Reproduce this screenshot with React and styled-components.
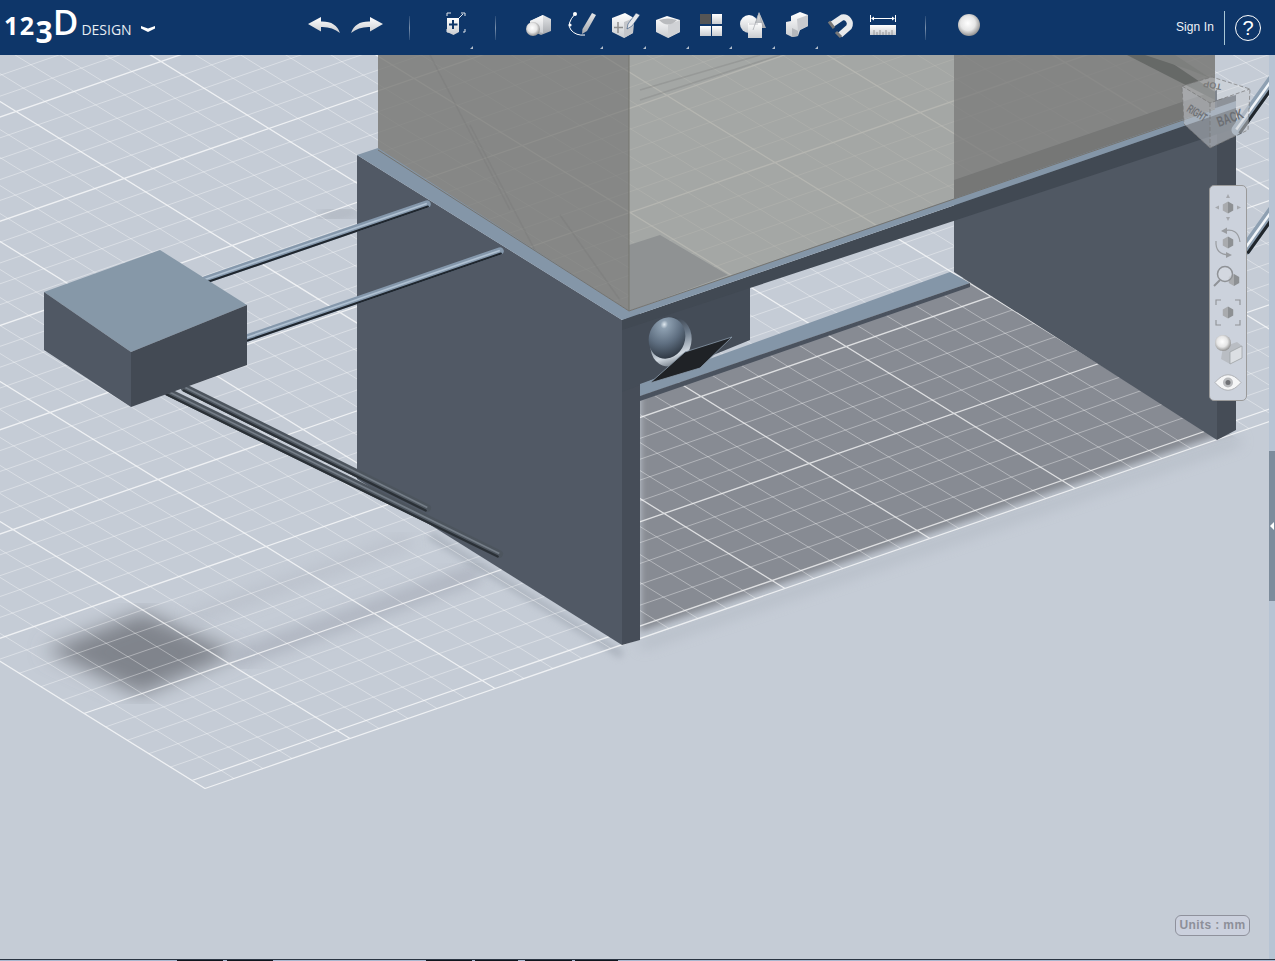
import React from 'react'
import styled, { createGlobalStyle } from 'styled-components'

const GlobalStyle = createGlobalStyle`
    html, body {
        margin: 0;
        padding: 0;
        background: #c5ccd6;
        overflow: hidden;
        font-family: "Liberation Sans", Arial, sans-serif;
    }
`

// floor grid lattice, page coordinates
const O = [192, 780.5]
const A = [108, 67]
const B = [145, -50]
const pt = (i, j) => [O[0] + i * A[0] + j * B[0], O[1] + i * A[1] + j * B[1]]
const fmt = p => `${p[0].toFixed(1)} ${p[1].toFixed(1)}`
const seg = (p, q) => `M${fmt(p)}L${fmt(q)}`

const EDGE_I = 0.12
const MIN_I = -9
const MAX_J = 11

const buildGrid = () => {
    let minor = ''
    let major = ''
    for (let n = MIN_I * 5; n <= 0; n++) {
        const i = n / 5
        const line = seg(pt(i, 0), pt(i, MAX_J))
        if (n % 5 === 0) major += line
        else minor += line
    }
    major += seg(pt(EDGE_I, 0), pt(EDGE_I, MAX_J))
    for (let n = 0; n <= MAX_J * 5; n++) {
        const j = n / 5
        const line = seg(pt(MIN_I, j), pt(EDGE_I, j))
        if (n % 5 === 0) major += line
        else minor += line
    }
    return { minor, major }
}

const grid = buildGrid()

const Page = styled.div`
    display: flex;
    flex-direction: column;
    width: 1275px;
    height: 961px;
`

const Toolbar = styled.header`
    display: flex;
    align-items: center;
    flex: 0 0 55px;
    background: #0e3669;
    color: #fff;
`

const Logo = styled.div`
    display: flex;
    align-items: flex-start;
    width: 299px;
    height: 55px;
    padding-left: 4px;
    font-family: "Open Sans", sans-serif;
`

const LogoNum = styled.span`
    font-size: ${p => p.$size}px;
    font-weight: ${p => p.$weight || 700};
    line-height: 1;
    margin-top: ${p => p.$top}px;
    margin-left: ${p => p.$left || 0}px;
    letter-spacing: ${p => p.$spacing || 0}px;
`

const LogoWord = styled.span`
    font-size: 14px;
    line-height: 1;
    margin: 23px 0 0 3px;
    color: #e8edf3;
`

const Chevron = styled.svg`
    width: 14px;
    height: 7px;
    margin: 25px 0 0 9px;
`

const Tool = styled.div`
    position: relative;
    flex: 0 0 43px;
    height: 55px;
    ${p => p.$marker && `
        &::after {
            content: '';
            position: absolute;
            right: 1px;
            bottom: 6px;
            border-style: solid;
            border-width: 0 0 3px 3px;
            border-color: transparent transparent #b4bfcd transparent;
        }
    `}
    svg {
        display: block;
    }
`

const Separator = styled.div`
    flex: 0 0 1px;
    height: 24px;
    margin-left: ${p => p.$left}px;
    margin-right: ${p => p.$right}px;
    background: linear-gradient(to bottom, rgba(255,255,255,0.1), rgba(255,255,255,0.45), rgba(255,255,255,0.1));
`

const SignIn = styled.div`
    margin-left: auto;
    margin-bottom: 2px;
    font-size: 12px;
    letter-spacing: 0.1px;
    color: #eef3f8;
`

const UserDivider = styled.div`
    width: 1px;
    height: 34px;
    margin: 0 10px;
    background: #a8c6d6;
`

const Help = styled.div`
    display: flex;
    align-items: center;
    justify-content: center;
    box-sizing: border-box;
    width: 26px;
    height: 26px;
    margin-right: 14px;
    border: 1.4px solid #fff;
    border-radius: 50%;
    font-size: 20px;
    line-height: 1;
    color: #fff;
`

const Viewport = styled.main`
    position: relative;
    flex: 1;
    overflow: hidden;
    background: #c5ccd6;
`

const Scene = styled.svg`
    display: block;
    width: 1275px;
    height: 904px;
`

const ViewCube = styled.svg`
    position: absolute;
    top: 15px;
    left: 1175px;
    width: 85px;
    height: 85px;
`

const NavPanel = styled.nav`
    position: absolute;
    top: 130px;
    left: 1209px;
    display: flex;
    flex-direction: column;
    box-sizing: border-box;
    width: 38px;
    height: 216px;
    padding-top: 4px;
    background: #ccd2dc;
    border: 1px solid #9a9a9a;
    border-radius: 5px;
`

const NavItem = styled.svg`
    display: block;
    flex: 0 0 35px;
    width: 36px;
    height: 35px;
`

const Units = styled.div`
    position: absolute;
    top: 860px;
    left: 1175px;
    box-sizing: border-box;
    width: 75px;
    height: 21px;
    border: 1px solid #8f919c;
    border-radius: 6px;
    background: #cbd0dd;
    color: #8d8f99;
    font-size: 12px;
    font-weight: 700;
    letter-spacing: 0.4px;
    line-height: 19px;
    text-align: center;
    white-space: nowrap;
`

const ScrollTrack = styled.div`
    position: absolute;
    top: 0;
    right: 0;
    bottom: 0;
    width: 6px;
    background: #b7c4d4;
`

const ScrollHandle = styled.div`
    position: absolute;
    top: 396px;
    left: 0;
    width: 6px;
    height: 150px;
    background: #7d8c9c;
    &::after {
        content: '';
        position: absolute;
        top: 71px;
        left: 1px;
        width: 0;
        height: 0;
        border-style: solid;
        border-width: 4px 4px 4px 0;
        border-color: transparent #fff transparent transparent;
    }
`

const StatusStrip = styled.footer`
    display: flex;
    flex: 0 0 2px;
    background: #a9b8d0;
    border-top: 1px solid #2a3442;
    box-sizing: border-box;
`

const StatusTab = styled.div`
    width: ${p => p.$width}px;
    margin-left: ${p => p.$left}px;
    background: #10161e;
`

const statusTabs = [
    [177, 46], [4, 46], [153, 46], [3, 43], [7, 47], [3, 43]
]

const Hex = ({ x, y, r = 6 }) => {
    const w = r * 0.87
    return (
        <g>
            <polygon points={`${x},${y - r} ${x - w},${y - r / 2} ${x - w},${y + r / 2} ${x},${y + r}`} fill="#a9abae" />
            <polygon points={`${x},${y - r} ${x + w},${y - r / 2} ${x + w},${y + r / 2} ${x},${y + r}`} fill="#8d9093" />
        </g>
    )
}

const Defs = () => (
    <svg width="0" height="0" style={{ position: 'absolute' }}>
        <defs>
            <linearGradient id="iconFill" x1="0" y1="0" x2="0" y2="1">
                <stop offset="0" stopColor="#ffffff" />
                <stop offset="1" stopColor="#c9ccd0" />
            </linearGradient>
            <linearGradient id="iconSide" x1="0" y1="0" x2="0" y2="1">
                <stop offset="0" stopColor="#e4e6e8" />
                <stop offset="1" stopColor="#a5a8ad" />
            </linearGradient>
            <radialGradient id="iconBall" cx="0.45" cy="0.42" r="0.6">
                <stop offset="0" stopColor="#ffffff" />
                <stop offset="0.55" stopColor="#e6e6e6" />
                <stop offset="1" stopColor="#8c8c8c" />
            </radialGradient>
            <radialGradient id="ball" cx="0.3" cy="0.22" r="0.85">
                <stop offset="0" stopColor="#dfe8ef" />
                <stop offset="0.12" stopColor="#8d9fb0" />
                <stop offset="0.55" stopColor="#5f6f81" />
                <stop offset="1" stopColor="#2e3742" />
            </radialGradient>
            <linearGradient id="ring" x1="0.2" y1="0" x2="0.8" y2="1">
                <stop offset="0" stopColor="#2f3640" />
                <stop offset="0.4" stopColor="#6a7888" />
                <stop offset="0.75" stopColor="#d0d8e0" />
                <stop offset="1" stopColor="#59646f" />
            </linearGradient>
            <filter id="blur3"><feGaussianBlur stdDeviation="3.5" /></filter>
            <filter id="blur7"><feGaussianBlur stdDeviation="7" /></filter>
            <filter id="blur10"><feGaussianBlur stdDeviation="10" /></filter>
            <clipPath id="underTable">
                <polygon points="640,388 970,276 1240,440 1240,720 640,720" />
            </clipPath>
        </defs>
    </svg>
)

// each toolbar icon is drawn in page coordinates, x0 is the button's left edge
const Icon = ({ x0, children }) => (
    <svg width="43" height="55" viewBox={`${x0} 0 43 55`}>{children}</svg>
)

const Undo = () => (
    <Icon x0={303}>
        <path d="M308 24L321 17V21.5Q336 21 340 33Q332 26.500 321 27V31.500Z" fill="url(#iconFill)" />
    </Icon>
)

const Redo = () => (
    <Icon x0={346}>
        <path d="M383 24L370 17V21.500Q355 21 351 33Q359 26.500 370 27V31.500Z" fill="url(#iconFill)" />
    </Icon>
)

const FitTool = () => (
    <Icon x0={431}>
        <path d="M447 16V13H451M461 13H465V16M447 29V32H449M463 32H465V29" fill="none" stroke="#dfe4ea" strokeWidth="1" />
        <path d="M447 18H459V32L453.500 35L447 32Z" fill="url(#iconFill)" />
        <path d="M453 20V29M449 24.500H457.500" stroke="#0e3669" strokeWidth="2" />
        <path d="M459 18L463 14" stroke="#dfe4ea" strokeWidth="1" />
    </Icon>
)

const Primitives = () => (
    <Icon x0={518}>
        <polygon points="530,21 543,15 551,19 551,31 541,35 530,30" fill="url(#iconSide)" />
        <polygon points="530,21 543,15 543,33 530,30" fill="url(#iconFill)" />
        <circle cx="533" cy="29" r="7" fill="url(#iconBall)" />
    </Icon>
)

const Sketch = () => (
    <Icon x0={561}>
        <path d="M575 14Q566 24 571 30Q576 36 585 35" fill="none" stroke="#fff" strokeWidth="1" />
        <circle cx="575" cy="14" r="2" fill="#fff" />
        <circle cx="570" cy="25" r="1.600" fill="#fff" />
        <polygon points="592,13 596,15 587,31 582,34 582.500,29" fill="url(#iconSide)" />
    </Icon>
)

const Construct = () => (
    <Icon x0={604}>
        <polygon points="612,18 625,13 634,18 633,33 624,38 612,32" fill="url(#iconFill)" />
        <polygon points="624,22 634,18 633,33 624,38" fill="#c4c6ca" />
        <path d="M618 22V33M614 27.500H623" stroke="#8f8f8f" strokeWidth="1.500" />
        <polygon points="636,13 640,15 632,26 627,29 628,24" fill="#e5e7ea" stroke="#0e3669" strokeWidth="0.500" />
    </Icon>
)

const Modify = () => (
    <Icon x0={647}>
        <polygon points="656,20 667,16 680,20 680,32 668,38 656,32" fill="url(#iconFill)" />
        <polygon points="668,25 680,20 680,32 668,38" fill="#d0d2d5" />
        <path d="M659 20Q668 29 677 20Q668 17 659 20Z" fill="#b9bbbe" />
    </Icon>
)

const Pattern = () => (
    <Icon x0={690}>
        <rect x="700" y="14" width="11" height="10" fill="#555" />
        <rect x="712" y="14" width="10" height="10" fill="url(#iconFill)" />
        <rect x="700" y="26" width="11" height="10" fill="url(#iconFill)" />
        <rect x="712" y="26" width="10" height="10" fill="url(#iconFill)" />
    </Icon>
)

const Combine = () => (
    <Icon x0={733}>
        <circle cx="749" cy="24" r="9" fill="url(#iconFill)" />
        <polygon points="759,12 766,28 753,28" fill="url(#iconSide)" />
        <rect x="748" y="23" width="14" height="15" fill="url(#iconFill)" />
        <path d="M759 13L753 30M759 13L763 27M749 24H758" stroke="#9a9ea4" strokeWidth="0.600" fill="none" />
    </Icon>
)

const Group = () => (
    <Icon x0={776}>
        <polygon points="791,16 800,12 808,15 808,26 800,30 798,36 792,37 786,34 786,22 791,21" fill="url(#iconFill)" />
        <polygon points="797,19 808,15 808,26 798,31" fill="#c9cbcf" />
        <polygon points="792,28 798,31 798,36 792,37" fill="#b5b8bc" />
    </Icon>
)

const Snap = () => (
    <Icon x0={819}>
        <path d="M831 25L842 17.500A6.500 6.500 0 0 1 849 27L840 35" fill="none" stroke="#e8eaec" strokeWidth="6" />
        <path d="M829 21.500L834 28M836 32L841 37" stroke="#777" strokeWidth="3" fill="none" />
    </Icon>
)

const Measure = () => (
    <Icon x0={862}>
        <path d="M870.500 15V22M895.500 15V22M873 18.500H893" stroke="#fff" strokeWidth="1" fill="none" />
        <path d="M871 18.500L874 16.500V20.500ZM895 18.500L892 16.500V20.500Z" fill="#fff" />
        <rect x="870" y="25" width="26" height="10" fill="url(#iconFill)" />
        <path d="M874 35V30M877 35V32M880 35V30M883 35V32M886 35V30M889 35V32M892 35V30" stroke="#888" strokeWidth="0.800" />
    </Icon>
)

const Material = () => (
    <Icon x0={948}>
        <circle cx="969" cy="25" r="11" fill="url(#iconBall)" />
    </Icon>
)

const rodTones = {
    light: { base: '#8598ac', low: '#1f262e', high: '#b0c1d2' },
    dark: { base: '#4d555e', low: '#2a3036', high: '#747d87' },
    bright: { base: '#8ea0b2', low: '#20262c', high: '#f2f6fa' }
}

// a cylinder seen from the side: a base stroke, a dark lower edge and a highlight
const Rod = ({ from, to, width = 7, tone = 'light' }) => {
    const colors = rodTones[tone]
    const dx = to[0] - from[0]
    const dy = to[1] - from[1]
    const len = Math.hypot(dx, dy)
    let nx = -dy / len
    let ny = dx / len
    if (ny < 0) {
        nx = -nx
        ny = -ny
    }
    const shifted = k => ({
        x1: from[0] + nx * k,
        y1: from[1] + ny * k,
        x2: to[0] + nx * k,
        y2: to[1] + ny * k
    })
    return (
        <g>
            <line {...shifted(0)} stroke={colors.base} strokeWidth={width} strokeLinecap="round" />
            <line {...shifted(width * 0.36)} stroke={colors.low} strokeWidth={width * 0.28} strokeLinecap="round" />
            <line {...shifted(-width * 0.08)} stroke={colors.high} strokeWidth={width * 0.22} />
        </g>
    )
}

const Floor = () => (
    <g>
        {/* soft shadows under the grid */}
        <polygon points="45,650 143,612 238,653 140,695" fill="#80848c" filter="url(#blur10)" />
        <path d="M232 660L480 572" stroke="#aab0bc" strokeWidth="20" filter="url(#blur7)" opacity="0.75" />
        <path d="M190 618L410 540" stroke="#b6bcc6" strokeWidth="16" filter="url(#blur7)" opacity="0.55" />
        <path d="M430 535L622 655" stroke="#98a0ab" strokeWidth="8" filter="url(#blur3)" opacity="0.55" />
        <path d="M640 645L1240 440" stroke="#a3aab4" strokeWidth="8" filter="url(#blur7)" opacity="0.55" />
        <path d="M320 218L360 210" stroke="#8e949e" strokeWidth="8" filter="url(#blur7)" opacity="0.6" />
        <g clipPath="url(#underTable)">
            <polygon points="640,380 970,270 1240,430 1217,436 640,632" fill="#878b93" filter="url(#blur3)" />
        </g>
        <path d={grid.minor} stroke="#fff" strokeOpacity="0.36" strokeWidth="1" fill="none" />
        <path d={grid.major} stroke="#fff" strokeOpacity="0.72" strokeWidth="1.300" fill="none" />
    </g>
)

const Table = () => (
    <g>
        {/* back plate */}
        <polygon points="954,180 1217,90 1217,440 954,272" fill="#505863" />
        <polygon points="1217,100 1236,95 1236,430 1217,440" fill="#454c56" />

        {/* left plate */}
        <polygon points="357,155 622,320 622,645 357,479" fill="#515965" />
        <polygon points="622,320 640,312 640,640 622,645" fill="#464d58" />

        {/* block under the front rail */}
        <polygon points="622,320 750,278 750,340 640,385 622,392" fill="#444c57" />

        {/* dark rail */}
        <polygon points="622,320 1236,108 1236,128 750,288 622,330" fill="#414953" />

        {/* shelf */}
        <polygon points="640,384 950,272 970,283 640,396" fill="#8496a8" />
        <polygon points="640,396 970,283 970,287 640,401" fill="#4a525e" />

        {/* glass */}
        <polygon points="378,55 629,55 629,311 378,152" fill="#757572" fillOpacity="0.8" />
        <polygon points="629,55 954,55 954,199 629,311" fill="#8d8d84" fillOpacity="0.6" />
        <polygon points="954,55 1215,55 1215,109 954,199" fill="#7b7b79" fillOpacity="0.88" />
        <polygon points="1127,55 1160,55 1215,92 1215,100" fill="#666967" />
        <polygon points="1145,55 1175,55 1210,78 1190,70" fill="#7d7f7d" />
        <path d="M430 55L510 210M470 125L540 260M560 215L620 300" stroke="#666" strokeWidth="1.500" opacity="0.15" fill="none" />
        <path d="M640 90L760 55M640 100L780 55" stroke="#666" strokeWidth="1.500" opacity="0.2" fill="none" />
        <polygon points="629,245 660,235 728,275 629,311" fill="#8f9293" />
        <line x1="629" y1="55" x2="629" y2="311" stroke="#75756f" strokeWidth="1" />

        {/* top lip */}
        <polygon points="357,155 378,148 629,311 1236,101 1236,108 622,320" fill="#8496a8" />
        <polyline points="378,150 629,311 1215,109" fill="none" stroke="#74736f" strokeWidth="1" />

        {/* ball in its socket and the dark plate */}
        <ellipse cx="671" cy="342" rx="20" ry="25" transform="rotate(20 671 342)" fill="url(#ring)" />
        <ellipse cx="667" cy="338" rx="18" ry="21" transform="rotate(20 667 338)" fill="url(#ball)" />
        <polygon points="650,383 685,352 732,337 700,368" fill="#1f2226" stroke="#8a9aab" strokeWidth="0.800" />

        {/* rods in front of the left plate */}
        <Rod from={[205, 280]} to={[427, 204]} width={7.5} />
        <Rod from={[247, 338]} to={[500, 251]} width={7.5} />
        <Rod from={[185, 388]} to={[427, 508]} width={8} tone="dark" />
        <Rod from={[168, 392]} to={[499, 554]} width={8} tone="dark" />

        {/* rods on the far side */}
        <Rod from={[1237, 130]} to={[1275, 77]} width={11} tone="bright" />
        <Rod from={[1245, 250]} to={[1275, 208]} width={11} tone="bright" />

        {/* small box */}
        <polygon points="44,292 160,250 247,305 131,352" fill="#8698a8" />
        <polygon points="44,292 131,352 131,407 44,350" fill="#505864" />
        <polygon points="131,352 247,305 247,365 131,407" fill="#434a54" />
    </g>
)

export default function App() {
    return (
        <Page>
            <GlobalStyle />
            <Defs />
            <Toolbar>
                <Logo>
                    <LogoNum $size={25} $top={13} $spacing={1.5}>12</LogoNum>
                    <LogoNum $size={30} $top={17}>3</LogoNum>
                    <LogoNum $size={35} $top={4} $weight={600}>D</LogoNum>
                    <LogoWord>DESIGN</LogoWord>
                    <Chevron viewBox="0 0 14 7">
                        <path d="M0 1L7 3.500L14 1V3.500L7 7L0 3.500Z" fill="#fff" />
                    </Chevron>
                </Logo>
                <Tool><Undo /></Tool>
                <Tool><Redo /></Tool>
                <Separator $left={20} $right={21} />
                <Tool $marker><FitTool /></Tool>
                <Separator $left={21} $right={22} />
                <Tool><Primitives /></Tool>
                <Tool $marker><Sketch /></Tool>
                <Tool $marker><Construct /></Tool>
                <Tool $marker><Modify /></Tool>
                <Tool $marker><Pattern /></Tool>
                <Tool $marker><Combine /></Tool>
                <Tool $marker><Group /></Tool>
                <Tool><Snap /></Tool>
                <Tool><Measure /></Tool>
                <Separator $left={20} $right={22} />
                <Tool><Material /></Tool>
                <SignIn>Sign In</SignIn>
                <UserDivider />
                <Help>?</Help>
            </Toolbar>
            <Viewport>
                <Scene viewBox="0 55 1275 904">
                    <Floor />
                    <Table />
                </Scene>
                <ViewCube viewBox="1175 70 85 85">
                    <polygon points="1182,86 1212,77 1250,89 1210,103" fill="#d6d9dd" fillOpacity="0.35" />
                    <polygon points="1182,86 1210,103 1210,148 1184,124" fill="#c8ccd2" fillOpacity="0.5" />
                    <polygon points="1210,103 1250,89 1248,130 1210,148" fill="#c8ccd2" fillOpacity="0.55" />
                    <path d="M1182 86L1212 77L1250 89L1248 130L1210 148L1184 124ZM1182 86L1210 103L1250 89M1210 103V148" fill="none" stroke="#777" strokeWidth="0.700" strokeDasharray="4 2" />
                    <text x="0" y="0" transform="translate(1222 84) rotate(190)" fontSize="9" fontWeight="700" fill="#7a7a7a">TOP</text>
                    <text x="0" y="0" transform="translate(1186 111) rotate(32) scale(0.75 1.35)" fontSize="9" fontWeight="700" fill="#6f7277">RIGHT</text>
                    <text x="0" y="0" transform="translate(1219 127) rotate(-20) scale(0.85 1.3)" fontSize="11" fontWeight="700" fill="#6c6f74">BACK</text>
                </ViewCube>
                <NavPanel>
                    <NavItem viewBox="0 0 36 35">
                        <Hex x={18} y={17.5} />
                        <path d="M18 4L16 8H20ZM18 31L16 27H20ZM5 17.500L9 15.500V19.500ZM31 17.500L27 15.500V19.500Z" fill="#a5a8ad" />
                    </NavItem>
                    <NavItem viewBox="0 0 36 35">
                        <Hex x={18} y={17.5} />
                        <path d="M13 6Q28 2 30 17M6 16Q5 30 20 30" fill="none" stroke="#999ca0" strokeWidth="1.200" />
                        <path d="M17 2.500L11 6L17 9ZM16 27L22 30L16 33Z" fill="#999ca0" />
                    </NavItem>
                    <NavItem viewBox="0 0 36 35">
                        <Hex x={24} y={20} />
                        <circle cx="15" cy="14" r="7.500" fill="#d6dae1" fillOpacity="0.7" stroke="#8f9296" strokeWidth="1.500" />
                        <path d="M10 20L4 26" stroke="#8f9296" strokeWidth="2" />
                    </NavItem>
                    <NavItem viewBox="0 0 36 35">
                        <Hex x={18} y={17.5} />
                        <path d="M6 10V5H11M25 5H30V10M6 25V30H11M25 30H30V25" fill="none" stroke="#8f9296" strokeWidth="1.100" />
                    </NavItem>
                    <NavItem viewBox="0 0 36 35">
                        <polygon points="13,17 27,12 32,16 32,28 20,34 11,29" fill="#b9bdc3" />
                        <polygon points="20,22 32,16 32,28 20,34" fill="#dcdfe3" stroke="#9a9da1" strokeWidth="0.700" />
                        <circle cx="13" cy="13" r="8" fill="url(#iconBall)" />
                    </NavItem>
                    <NavItem viewBox="0 0 36 35">
                        <path d="M5 17.500Q18 2 31 17.500Q18 33 5 17.500Z" fill="#f5f6f7" stroke="#a4a7ab" strokeWidth="0.800" />
                        <circle cx="18" cy="17.500" r="5" fill="#b9bbbe" />
                        <circle cx="18" cy="17.500" r="2.500" fill="#6f7175" />
                    </NavItem>
                </NavPanel>
                <Units>Units : mm</Units>
                <ScrollTrack>
                    <ScrollHandle />
                </ScrollTrack>
            </Viewport>
            <StatusStrip>
                {statusTabs.map(([left, width], i) => (
                    <StatusTab key={i} $left={left} $width={width} />
                ))}
            </StatusStrip>
        </Page>
    )
}
